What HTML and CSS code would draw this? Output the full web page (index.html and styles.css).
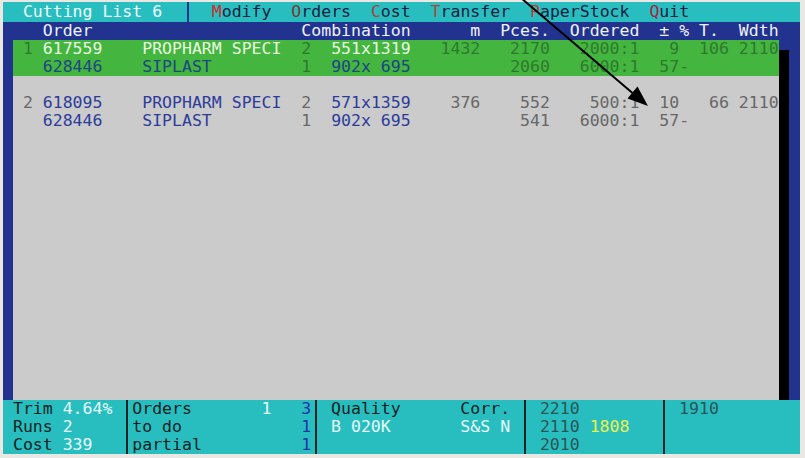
FILE: index.html
```html
<!DOCTYPE html>
<html lang="en">
<head>
<meta charset="utf-8">
<title>Cutting List 6</title>
<link rel="stylesheet" href="styles.css">
</head>
<body>
<div class="screen">
  <div class="menubar">
    <div class="title line">Cutting List 6</div>
    <div class="menu line"><span class="k1">M</span>odify  <span class="k2">O</span>rders  <span class="k3">C</span>ost  <span class="k4">T</span>ransfer  <span class="k5">P</span>aperStock  <span class="k6">Q</span>uit</div>
  </div>
  <div class="header line">    Order                     Combination      m  Pces.  Ordered  ± % T.  Wdth</div>
  <div class="body">
    <div class="lcol"></div>
    <div class="pane">
      <div class="selected">
        <div class="line"><span class="dg"> 1 </span><span class="lt">617559    PROPHARM SPECI</span><span class="dg">  2  </span><span class="lt">551x1319</span><span class="dg">   1432   2170   2000:1   9  106 2110</span></div>
        <div class="line"><span class="dg">   </span><span class="nv">628446    SIPLAST</span><span class="dg">         1  </span><span class="nv">902x 695</span><span class="dg">          2060   6000:1  57-</span></div>
      </div>
      <div class="line"> </div>
      <div class="line"><span class="gy"> 2 </span><span class="bl">618095    PROPHARM SPECI</span><span class="gy">  2  </span><span class="bl">571x1359</span><span class="gy">    376    552    500:1  10   66 2110</span></div>
      <div class="line"><span class="gy">   </span><span class="bl">628446    SIPLAST</span><span class="gy">         1  </span><span class="bl">902x 695</span><span class="gy">           541   6000:1  57-</span></div>
    </div>
    <div class="scol"><div class="thumb"></div></div>
    <div class="rcol"></div>
  </div>
  <div class="status">
    <div class="sec s1">
      <div class="line">Trim <span class="w">4.64%</span></div>
      <div class="line">Runs <span class="w">2</span></div>
      <div class="line">Cost <span class="w">339</span></div>
    </div>
    <div class="sec s2">
      <div class="line">Orders       <span class="w">1</span>   <span class="b">3</span></div>
      <div class="line">to do            <span class="b">1</span></div>
      <div class="line">partial          <span class="b">1</span></div>
    </div>
    <div class="sec s3">
      <div class="line">Quality      Corr.</div>
      <div class="line"><span class="w">B 020K       S&amp;S N</span></div>
      <div class="line"> </div>
    </div>
    <div class="sec s4">
      <div class="line"><span class="sl">2210</span></div>
      <div class="line"><span class="sl">2110</span> <span class="y">1808</span></div>
      <div class="line"><span class="sl">2010</span></div>
    </div>
    <div class="sec s5">
      <div class="line"><span class="sl">1910</span></div>
    </div>
  </div>
  <svg class="arrow" width="805" height="458" viewBox="0 0 805 458" aria-hidden="true">
    <line x1="521" y1="-2" x2="636" y2="96" stroke="#000" stroke-width="2"/>
    <polygon points="648,106 627.5,98.5 637.5,86.5" fill="#000"/>
  </svg>
</div>
</body>
</html>
```
FILE: styles.css
```css
html, body {
  margin: 0;
  padding: 0;
  background: #ebe7e3;
}

.screen {
  position: relative;
  width: 805px;
  height: 458px;
  box-sizing: border-box;
  padding: 2px 5px 4px 3px;
  display: flex;
  flex-direction: column;
  background: #ebe7e3;
  font-family: "DejaVu Sans Mono", "Liberation Mono", monospace;
  font-size: 16.53px;
  overflow: hidden;
}

.line {
  white-space: pre;
  height: 18px;
  line-height: 18px;
}

/* top menu bar */
.menubar {
  display: flex;
  height: 20px;
  background: #28bec0;
}
.menubar .line {
  height: 20px;
  line-height: 20px;
}
.title {
  box-sizing: border-box;
  width: calc(18.5ch + 2px);
  padding-left: 2ch;
  border-right: 2px solid #22338f;
  color: #effcfc;
}
.menu {
  padding-left: calc(2.5ch - 2px);
  color: #16203e;
}
.k1 { color: #d42b2b; }
.k2 { color: #7c3a32; }
.k3 { color: #a8443c; }
.k4 { color: #b0452f; }
.k5 { color: #c23a36; }
.k6 { color: #a8233c; }

/* column header */
.header {
  background: #22338f;
  color: #eef2ff;
}

/* list body */
.body {
  display: flex;
  height: 360px;
}
.lcol {
  width: 1ch;
  background: #22338f;
}
.pane {
  width: 77ch;
  background: #cbcbcb;
}
.selected {
  background: #44b53e;
}
.scol {
  width: 1ch;
  display: flex;
  flex-direction: column;
  background: #22338f;
}
.thumb {
  flex: 1;
  margin-top: 10px;
  background: #000;
}
.rcol {
  flex: 1;
  background: #22338f;
}

.dg { color: #2d7a2f; }
.lt { color: #e8f8e0; }
.nv { color: #1d4685; }
.gy { color: #676767; }
.bl { color: #2d3c9b; }

/* status panel */
.status {
  display: flex;
  height: 54px;
  background: #28bec0;
  color: #0d1f1f;
}
.sec {
  box-sizing: border-box;
  border-right: 2px solid #122424;
}
.s1 {
  width: calc(12.5ch + 1px);
  padding-left: 1ch;
}
.s2 {
  width: 19ch;
  padding-left: calc(0.5ch - 1px);
}
.s3 {
  width: 21ch;
  padding-left: calc(1.5ch - 1px);
}
.s4 {
  width: 14ch;
  padding-left: calc(1.5ch - 1px);
}
.s5 {
  flex: 1;
  border-right: none;
  padding-left: calc(1.5ch - 1px);
}
.w { color: #e6fafa; }
.b { color: #2233aa; }
.sl { color: #2b5555; }
.y { color: #eef04a; }

.arrow {
  position: absolute;
  left: 0;
  top: 0;
  pointer-events: none;
}
```
